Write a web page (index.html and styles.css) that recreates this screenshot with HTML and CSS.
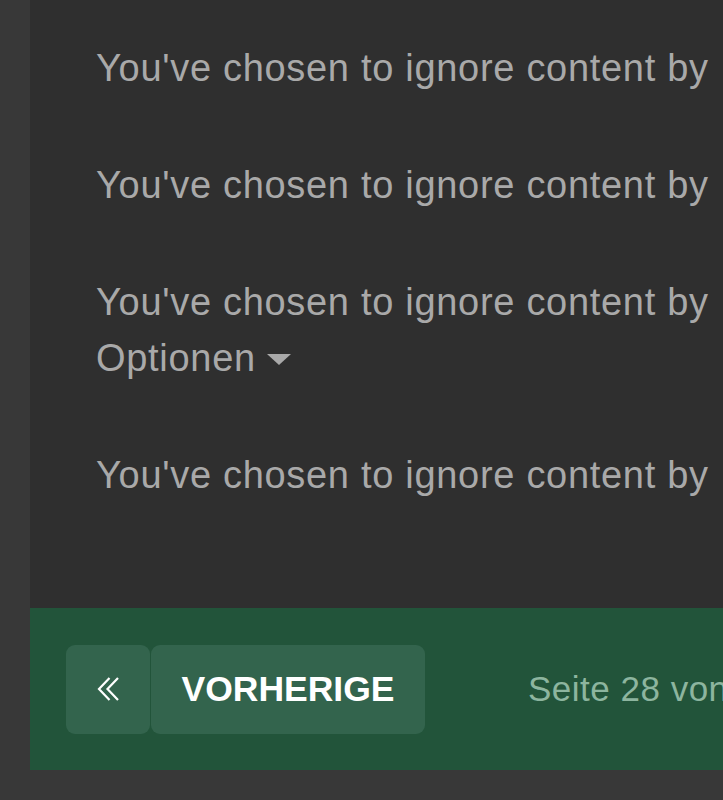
FILE: index.html
```html
<!DOCTYPE html>
<html lang="de">
  <head>
    <meta charset="UTF-8" />
    <meta name="viewport" content="width=device-width, initial-scale=1.0" />
    <title>Thema - Seite 28</title>
    <link rel="stylesheet" href="styles.css">
  </head>
  <body>
    <div class="page">
      <main class="posts">
        <div class="post ignored">You've chosen to ignore content by</div>
        <div class="post ignored">You've chosen to ignore content by</div>
        <div class="post ignored">
          You've chosen to ignore content by
          <div class="options">Optionen <span class="caret"></span></div>
        </div>
        <div class="post ignored">You've chosen to ignore content by</div>
      </main>
      <nav class="pager">
        <a class="pager-btn first" href="#" title="Erste">
          <svg width="22" height="24" viewBox="0 0 22 24" fill="none" stroke="#fff" stroke-width="2.2">
            <polyline points="12.5,1 2,12 12.5,23" />
            <polyline points="21,1 10.5,12 21,23" />
          </svg>
        </a>
        <a class="pager-btn prev" href="#">VORHERIGE</a>
        <span class="pager-info">Seite 28 von 30</span>
      </nav>
    </div>
  </body>
</html>
```

FILE: styles.css
```css
body {
  margin: 0;
  background-color: #383838;
  font-family: "Liberation Sans", Arial, sans-serif;
  overflow: hidden;
}
.page {
  margin-left: 30px;
  width: 900px;
  padding-bottom: 30px;
}
.posts {
  background-color: #2f2f2f;
  padding: 40px 0 105px 66px;
  display: flex;
  flex-direction: column;
  gap: 61px;
}
.post {
  color: #a9a9a9;
  font-size: 38px;
  letter-spacing: 0.7px;
  line-height: 56px;
  white-space: nowrap;
}
.options {
  display: flex;
  align-items: center;
  gap: 11px;
}
.caret {
  width: 0;
  height: 0;
  border-left: 12px solid transparent;
  border-right: 12px solid transparent;
  border-top: 11px solid #a9a9a9;
  margin-top: 2px;
}
.pager {
  background-color: #22543a;
  height: 162px;
  padding-left: 36px;
  display: flex;
  align-items: center;
  gap: 1px;
}
.pager-btn {
  display: flex;
  align-items: center;
  justify-content: center;
  height: 89px;
  background-color: #33644d;
  border-radius: 9px;
  color: #fff;
  text-decoration: none;
}
.first {
  width: 84px;
}
.prev {
  width: 274px;
  font-size: 35.5px;
  font-weight: bold;
}
.pager-info {
  margin-left: 102px;
  color: #8db59f;
  font-size: 35px;
  letter-spacing: 0.5px;
  white-space: nowrap;
}
```
